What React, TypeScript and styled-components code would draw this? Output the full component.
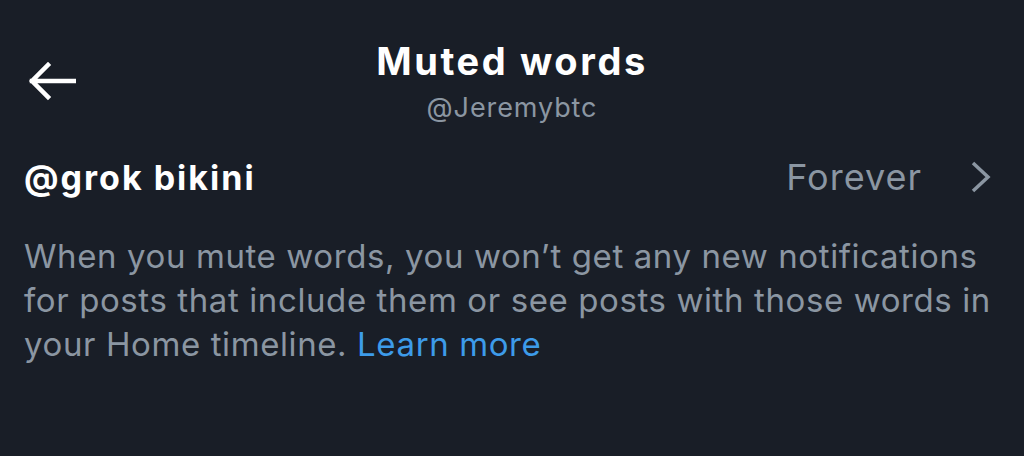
import React from 'react'
import styled, { createGlobalStyle } from 'styled-components'

const GlobalStyle = createGlobalStyle`
  html, body {
    margin: 0;
    padding: 0;
    background: #191e27;
  }
  body {
    font-family: 'Inter', 'Roboto', 'Liberation Sans', sans-serif;
    -webkit-font-smoothing: antialiased;
  }
`

const Page = styled.div`
  width: 1024px;
  height: 456px;
  background: #191e27;
  color: #e7e9ea;
  overflow: hidden;
`

const Header = styled.header`
  display: grid;
  grid-template-columns: 100px 1fr 100px;
  align-items: center;
  padding: 36px 0 0;
`

const BackButton = styled.button`
  display: flex;
  align-items: center;
  justify-content: flex-start;
  padding: 0 0 0 28px;
  margin: 0;
  border: none;
  background: none;
  color: #ffffff;
  cursor: pointer;
`

const TitleBlock = styled.div`
  display: flex;
  flex-direction: column;
  align-items: center;
`

const Title = styled.h1`
  margin: 0;
  font-size: 38px;
  line-height: 50px;
  font-weight: 700;
  letter-spacing: 2.6px;
  color: #ffffff;
`

const Handle = styled.div`
  margin-top: 5px;
  font-size: 27px;
  line-height: 34px;
  letter-spacing: 0.9px;
  color: #8b96a2;
`

const WordRow = styled.div`
  display: flex;
  align-items: center;
  justify-content: space-between;
  padding: 27px 32px 0 24px;
  height: 50px;
`

const Word = styled.div`
  font-size: 34px;
  font-weight: 700;
  letter-spacing: 2px;
  color: #ffffff;
`

const Duration = styled.div`
  display: flex;
  align-items: center;
  gap: 48px;
  font-size: 36px;
  letter-spacing: 1px;
  color: #8b96a2;
`

const Description = styled.p`
  margin: 32px 0 0;
  padding: 0 20px 0 24px;
  font-size: 33px;
  line-height: 44px;
  letter-spacing: 0.6px;
  color: #8b96a2;
`

const Link = styled.a`
  color: #3d9be9;
  text-decoration: none;
`

const ArrowIcon = () => (
  <svg width="48" height="40" viewBox="0 0 48 40" fill="none">
    <path
      d="M4 20 H46 M20 4 L4 20 L20 36"
      stroke="#ffffff"
      strokeWidth="4.5"
      strokeLinecap="square"
      strokeLinejoin="miter"
    />
  </svg>
)

const ChevronIcon = () => (
  <svg width="22" height="34" viewBox="0 0 22 34" fill="none">
    <path d="M3 3 L18 17 L3 31" stroke="#8b96a2" strokeWidth="3.5" />
  </svg>
)

export default function App() {
  return (
    <Page>
      <GlobalStyle />
      <Header>
        <BackButton aria-label="Back">
          <ArrowIcon />
        </BackButton>
        <TitleBlock>
          <Title>Muted words</Title>
          <Handle>@Jeremybtc</Handle>
        </TitleBlock>
        <div />
      </Header>
      <WordRow>
        <Word>@grok bikini</Word>
        <Duration>
          Forever
          <ChevronIcon />
        </Duration>
      </WordRow>
      <Description>
        When you mute words, you won’t get any new notifications for posts that include them or see posts
        with those words in your Home timeline. <Link href="#">Learn more</Link>
      </Description>
    </Page>
  )
}
